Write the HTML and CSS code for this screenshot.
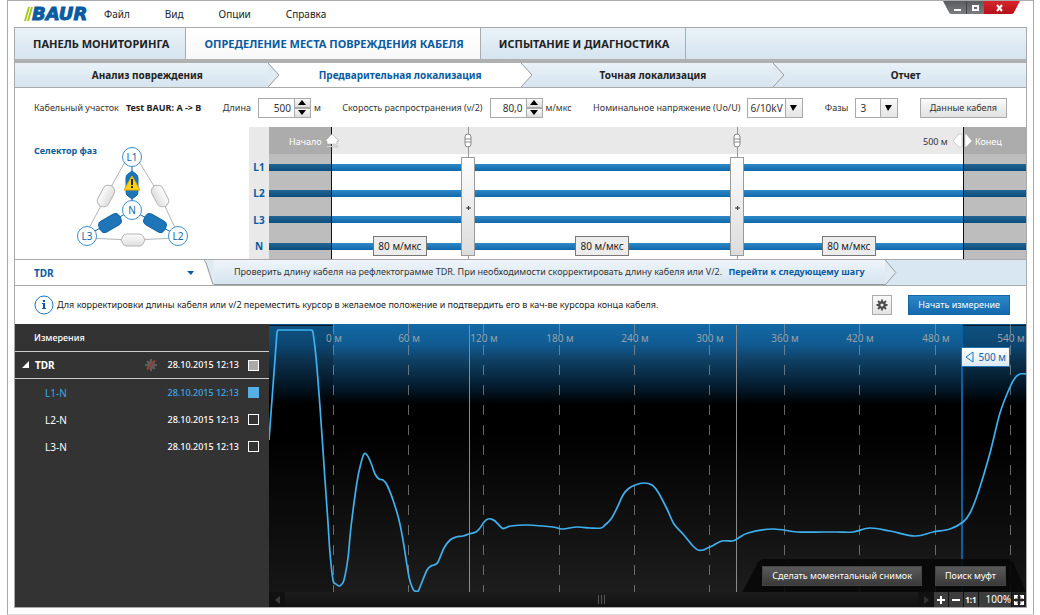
FILE: index.html
```html
<!DOCTYPE html>
<html lang="ru">
<head>
    <meta charset="UTF-8">
    <meta name="viewport" content="width=device-width, initial-scale=1.0">
    <title>BAUR - Предварительная локализация</title>
    <link rel="stylesheet" href="styles.css">
</head>
<body>
    <div class="window">
        <header class="titlebar">
            <div class="logo">
                <svg width="9" height="14" viewBox="0 0 9 14"><path d="M0 14L4 0H6L2 14ZM3 14L7 0H9L5 14Z" fill="#a9c91c"/></svg>
                <span>BAUR</span>
            </div>
            <nav class="menu">
                <a href="#">Файл</a>
                <a href="#">Вид</a>
                <a href="#">Опции</a>
                <a href="#">Справка</a>
            </nav>
            <div class="window-buttons">
                <button type="button" class="win-min" aria-label="Свернуть"><svg width="9" height="8"><path d="M1 5H8V7H1Z" fill="#fff"/></svg></button>
                <button type="button" class="win-max" aria-label="Развернуть"><svg width="9" height="8"><path d="M2 2H7V6H2Z" fill="none" stroke="#fff" stroke-width="2"/></svg></button>
                <button type="button" class="win-close" aria-label="Закрыть"><svg width="9" height="8"><path d="M2 1L7 7M7 1L2 7" stroke="#fff" stroke-width="2"/></svg></button>
            </div>
        </header>

        <main class="app">
            <!-- Tabs -->
            <nav class="tabs">
                <a href="#">ПАНЕЛЬ МОНИТОРИНГА</a>
                <a href="#" class="active">ОПРЕДЕЛЕНИЕ МЕСТА ПОВРЕЖДЕНИЯ КАБЕЛЯ</a>
                <a href="#">ИСПЫТАНИЕ И ДИАГНОСТИКА</a>
            </nav>

            <!-- Steps -->
            <nav class="steps">
                <a href="#" class="first"><span>Анализ повреждения</span></a>
                <a href="#" class="active"><svg class="arrow arrow-blue" viewBox="0 0 12 24"><path d="M0 0L11 12L0 24"/></svg><span>Предварительная локализация</span></a>
                <a href="#"><svg class="arrow arrow-white" viewBox="0 0 12 24"><path d="M0 0L11 12L0 24"/></svg><span>Точная локализация</span></a>
                <a href="#"><svg class="arrow arrow-blue" viewBox="0 0 12 24"><path d="M0 0L11 12L0 24"/></svg><span>Отчет</span></a>
            </nav>

            <!-- Cable parameters -->
            <form class="params">
                <div class="field">
                    <span>Кабельный участок</span>
                    <strong>Test BAUR: A -&gt; B</strong>
                </div>
                <div class="field">
                    <label for="length">Длина</label>
                    <div class="spinner">
                        <input type="text" id="length" value="500">
                        <div class="spin">
                            <button type="button" aria-label="Больше"><svg width="8" height="5"><path d="M4 0L8 5H0Z"/></svg></button>
                            <button type="button" aria-label="Меньше"><svg width="8" height="5"><path d="M0 0H8L4 5Z"/></svg></button>
                        </div>
                        <span class="unit">м</span>
                    </div>
                </div>
                <div class="field">
                    <label for="speed">Скорость распространения (v/2)</label>
                    <div class="spinner">
                        <input type="text" id="speed" value="80,0">
                        <div class="spin">
                            <button type="button" aria-label="Больше"><svg width="8" height="5"><path d="M4 0L8 5H0Z"/></svg></button>
                            <button type="button" aria-label="Меньше"><svg width="8" height="5"><path d="M0 0H8L4 5Z"/></svg></button>
                        </div>
                        <span class="unit">м/мкс</span>
                    </div>
                </div>
                <div class="field">
                    <label for="voltage">Номинальное напряжение (Uo/U)</label>
                    <select id="voltage" class="select-voltage"><option>6/10kV</option></select>
                </div>
                <div class="field">
                    <label for="phases">Фазы</label>
                    <select id="phases" class="select-phases"><option>3</option></select>
                </div>
                <button type="button" class="btn">Данные кабеля</button>
            </form>

            <!-- Phase selector and cable scheme -->
            <section class="cable">
                <div class="selector">
                    <h2>Селектор фаз</h2>
                    <svg class="phases" width="120" height="108" viewBox="0 0 120 108">
                        <defs>
                            <linearGradient id="pill" x1="0" y1="0" x2="0" y2="1">
                                <stop offset="0" stop-color="#fdfdfd"/>
                                <stop offset="1" stop-color="#dedede"/>
                            </linearGradient>
                        </defs>
                        <g stroke="#b4b4b4" fill="url(#pill)">
                            <path d="M55 17L35 53L15 91M67 17L89 53L107 91M15 95L61 97L107 95" fill="none"/>
                            <path d="M-12 0L-10 -4Q-9 -6 -6 -6H6Q9 -6 10 -4L12 0L10 4Q9 6 6 6H-6Q-9 6 -10 4Z" transform="translate(62 97)"/>
                            <path d="M-12 0L-10 -4Q-9 -6 -6 -6H6Q9 -6 10 -4L12 0L10 4Q9 6 6 6H-6Q-9 6 -10 4Z" transform="translate(35 53) rotate(-62)"/>
                            <path d="M-12 0L-10 -4Q-9 -6 -6 -6H6Q9 -6 10 -4L12 0L10 4Q9 6 6 6H-6Q-9 6 -10 4Z" transform="translate(89 53) rotate(62)"/>
                        </g>
                        <g stroke="#1566a8" fill="#1e75b8">
                            <path d="M61 67V15M61 67L15 93M61 67L107 93" fill="none"/>
                            <path d="M-14 0L-11 -4Q-10 -6 -7 -6H7Q10 -6 11 -4L14 0L11 4Q10 6 7 6H-7Q-10 6 -11 4Z" transform="translate(61 42) rotate(90)"/>
                            <path d="M-12 0L-11 -4Q-10 -6 -7 -6H7Q10 -6 11 -4L12 0L11 4Q10 6 7 6H-7Q-10 6 -11 4Z" transform="translate(39 80) rotate(-30)"/>
                            <path d="M-12 0L-11 -4Q-10 -6 -7 -6H7Q10 -6 11 -4L12 0L11 4Q10 6 7 6H-7Q-10 6 -11 4Z" transform="translate(84 80) rotate(30)"/>
                        </g>
                        <path d="M61 33L69 47H53Z" fill="#fcd116" stroke="#e0b000" stroke-linejoin="round"/>
                        <path d="M61 36V42M61 43V45" stroke="#222" stroke-width="2"/>
                        <g fill="#fff" stroke="#3c8fcb">
                            <circle cx="61" cy="14" r="9.500"/>
                            <circle cx="61" cy="67" r="9.500"/>
                            <circle cx="16" cy="93" r="9.500"/>
                            <circle cx="107" cy="93" r="9.500"/>
                        </g>
                        <g class="phase-names">
                            <text x="61" y="18">L1</text>
                            <text x="61" y="71">N</text>
                            <text x="16" y="97">L3</text>
                            <text x="107" y="97">L2</text>
                        </g>
                    </svg>
                </div>
                <div class="wire-names">
                    <span>L1</span>
                    <span>L2</span>
                    <span>L3</span>
                    <span>N</span>
                </div>
                <div class="scheme">
                    <svg viewBox="0 0 757 132">
                        <defs>
                            <linearGradient id="wire" x1="0" y1="0" x2="0" y2="1">
                                <stop offset="0" stop-color="#2f89c8"/>
                                <stop offset="1" stop-color="#0f68aa"/>
                            </linearGradient>
                            <linearGradient id="joint" x1="0" y1="0" x2="0" y2="1">
                                <stop offset="0" stop-color="#fdfdfd"/>
                                <stop offset="1" stop-color="#dcdcdc"/>
                            </linearGradient>
                        </defs>
                        <rect width="757" height="27" fill="#e9e9e9"/>
                        <g fill="url(#wire)">
                            <rect y="37" width="757" height="7"/>
                            <rect y="63" width="757" height="7"/>
                            <rect y="89" width="757" height="7"/>
                            <rect y="116" width="757" height="7"/>
                        </g>
                        <g fill="#000" fill-opacity=".26">
                            <rect width="62" height="132"/>
                            <rect x="694" width="63" height="132"/>
                        </g>
                        <path d="M62 0V132M694 0V132" stroke="#111" transform="translate(.5)"/>
                        <path d="M199 0V132M468 0V132" stroke="#999" transform="translate(.5)"/>
                        <g fill="#fff" stroke="#888">
                            <rect x="196" y="7" width="6" height="13" rx="3"/>
                            <rect x="465" y="7" width="6" height="13" rx="3"/>
                            <path d="M196 12H202M196 15H202M465 12H471M465 15H471"/>
                        </g>
                        <path d="M63 7L70 14H68V17H58V14H56Z M57 19H69V20H57Z" fill="#fff" stroke="#999" stroke-width=".5"/>
                        <path d="M693 7V20H690L684 14L690 7ZM696 7V20H697L703 14L697 7Z" fill="#fff" stroke="#aaa" stroke-width=".5"/>
                        <g fill="url(#joint)" stroke="#999">
                            <rect x="192.5" y="30.500" width="13" height="98"/>
                            <rect x="461.5" y="30.500" width="13" height="98"/>
                        </g>
                        <path d="M197 81H202M199.500 79V83M466 81H471M468.500 79V83" stroke="#333"/>
                        <text class="mark-light" x="20" y="18">Начало</text>
                        <text class="mark-dark" x="654" y="18">500 м</text>
                        <text class="mark-light" x="706" y="18">Конец</text>
                    </svg>
                    <button type="button" class="speed speed-1">80 м/мкс</button>
                    <button type="button" class="speed speed-2">80 м/мкс</button>
                    <button type="button" class="speed speed-3">80 м/мкс</button>
                </div>
            </section>

            <!-- Method and hint -->
            <div class="method">
                <select class="method-select" aria-label="Метод"><option>TDR</option></select>
                <svg class="slant" viewBox="0 0 10 26"><path d="M0 0H10V26H9Z" fill="#dfeaf3"/><path d="M0 0L2 3L9 25H10" fill="none" stroke="#999"/></svg>
                <p class="hint">Проверить длину кабеля на рефлектограмме TDR. При необходимости скорректировать длину кабеля или V/2. <a href="#">Перейти к следующему шагу</a></p>
                <svg class="arrow arrow-hint" viewBox="0 0 12 26"><path d="M0 0L11 13L0 26"/></svg>
            </div>

            <div class="info">
                <svg width="20" height="20" viewBox="0 0 20 20">
                    <circle cx="10" cy="10" r="9" fill="#fff" stroke="#1e75b8"/>
                    <path d="M8 8H11V13H12V14H8V13H9V9H8ZM9 5H11V7H9Z" fill="#0a5ba0"/>
                </svg>
                <p>Для корректировки длины кабеля или v/2 переместить курсор в желаемое положение и подтвердить его в кач-ве курсора конца кабеля.</p>
                <button type="button" class="btn btn-icon" aria-label="Настройки">
                    <svg width="12" height="12" viewBox="-6 -6 12 12">
                        <circle r="2.700" fill="none" stroke="#4a4a4a" stroke-width="2.200"/>
                        <path d="M0 -5.500V-3M0 5.500V3M-5.500 0H-3M5.500 0H3M-4 -4L-2 -2M4 4L2 2M-4 4L-2 2M4 -4L2 -2" stroke="#4a4a4a" stroke-width="1.800"/>
                    </svg>
                </button>
                <button type="button" class="btn-primary">Начать измерение</button>
            </div>

            <!-- Measurements -->
            <section class="measure">
                <aside class="sidebar">
                    <h2>Измерения</h2>
                    <ul>
                        <li class="group">
                            <svg class="tree" width="8" height="8"><path d="M7 0V7H0Z" fill="#fff"/></svg>
                            <label for="m-tdr">TDR</label>
                            <svg class="gear" width="14" height="14" viewBox="-7 -7 14 14">
                                <circle r="4" fill="#5c5c5c"/>
                                <path d="M0 -6V6M-6 0H6M-4 -4L4 4M-4 4L4 -4" stroke="#5c5c5c" stroke-width="2"/>
                                <path d="M-4 5L4 -5" stroke="#a33128" stroke-width="1.5"/>
                            </svg>
                            <time>28.10.2015 12:13</time>
                            <input type="checkbox" id="m-tdr" class="partial">
                        </li>
                        <li class="selected">
                            <label for="m-l1">L1-N</label>
                            <time>28.10.2015 12:13</time>
                            <input type="checkbox" id="m-l1" checked>
                        </li>
                        <li>
                            <label for="m-l2">L2-N</label>
                            <time>28.10.2015 12:13</time>
                            <input type="checkbox" id="m-l2">
                        </li>
                        <li>
                            <label for="m-l3">L3-N</label>
                            <time>28.10.2015 12:13</time>
                            <input type="checkbox" id="m-l3">
                        </li>
                    </ul>
                </aside>

                <div class="chart">
                    <div class="plot">
                        <svg viewBox="0 0 757 268">
                            <defs>
                                <linearGradient id="sky" x1="0" y1="0" x2="0" y2="1">
                                    <stop offset="0" stop-color="#1369a6"/>
                                    <stop offset=".08" stop-color="#105a90"/>
                                    <stop offset=".13" stop-color="#104267"/>
                                    <stop offset=".24" stop-color="#03192a"/>
                                    <stop offset=".3" stop-color="#000"/>
                                    <stop offset=".4" stop-color="#000"/>
                                    <stop offset="1" stop-color="#1d1d1d"/>
                                </linearGradient>
                            </defs>
                            <rect width="757" height="268" fill="url(#sky)"/>
                            <g fill="#000" fill-opacity=".22">
                                <rect width="64" height="268"/>
                                <rect x="694" width="63" height="268"/>
                            </g>
                            <path d="M0 1.500H64M694 1.500H757" stroke="#0a1a28"/>
                            <g id="grid"></g>
                            <path d="M200 1V268M467 1V268" stroke="#8a8a8a" stroke-width="1" transform="translate(.5)"/>
                            <path d="M693 1V268" stroke="#0a5fa5" stroke-width="2"/>
                            <path id="curve" fill="none" stroke="#3fb0ee" stroke-width="1.700"/>
                        </svg>
                        <button type="button" class="cursor-tag">
                            <svg width="9" height="12"><path d="M8 1V11L1 6Z" fill="none" stroke="#1e75b8"/></svg>
                            500 м
                        </button>
                        <div class="actions">
                            <button type="button" class="btn-dark">Сделать моментальный снимок</button>
                            <button type="button" class="btn-dark">Поиск муфт</button>
                        </div>
                    </div>
                    <div class="footer">
                        <button type="button" class="scroll-btn" aria-label="Влево"><svg width="5" height="8"><path d="M5 0V8L0 4Z" fill="#3c3c3c"/></svg></button>
                        <div class="scroll-track"><svg width="7" height="9"><path d="M1 0V9M4 0V9M7 0V9" stroke="#555" transform="translate(-.5)"/></svg></div>
                        <button type="button" class="scroll-btn" aria-label="Вправо"><svg width="5" height="8"><path d="M0 0V8L5 4Z" fill="#333"/></svg></button>
                        <div class="zoom">
                            <button type="button" aria-label="Увеличить"><svg width="8" height="8"><path d="M4 0V8M0 4H8" stroke="#fff" stroke-width="2"/></svg></button>
                            <button type="button" aria-label="Уменьшить"><svg width="8" height="8"><path d="M0 4H8" stroke="#fff" stroke-width="2"/></svg></button>
                            <button type="button" class="one">1:1</button>
                            <output>100%</output>
                            <button type="button" class="full" aria-label="На весь экран"><svg width="10" height="10"><path d="M0 0H4V1L3 2L4 3L3 4L2 3L1 4H0ZM10 0V4H9L8 3L7 4L6 3L7 2L6 1V0ZM0 10V6H1L2 7L3 6L4 7L3 8L4 9V10ZM10 10H6V9L7 8L6 7L7 6L8 7L9 6H10Z" fill="#fff"/></svg></button>
                        </div>
                    </div>
                </div>
            </section>
        </main>
    </div>

    <script>
        const ns = "http://www.w3.org/2000/svg";

        // Distance grid, 60 m per line
        const grid = document.getElementById("grid");
        for (let i = 0; i < 10; i++) {
            const x = Math.round(65 + i * 75.2);
            const line = document.createElementNS(ns, "path");
            line.setAttribute("d", `M${x - 0.5} 0V10M${x - 0.5} 21V268`);
            line.setAttribute("class", "grid-line");
            grid.appendChild(line);

            const text = document.createElementNS(ns, "text");
            text.setAttribute("x", x);
            text.setAttribute("y", 18);
            text.setAttribute("class", "grid-label");
            text.textContent = i * 60 + " м";
            grid.appendChild(text);
        }

        // Reflectogram L1-N
        const pulse = [[0, 116], [8, 8], [9, 6], [43, 6], [44, 8]];
        const points = [
            [44, 8], [47, 33], [51, 83], [56, 156], [59, 199], [61, 229], [64, 256], [67, 260], [70, 262], [72, 261],
            [75, 256], [79, 234], [82, 203], [88, 158], [92, 139], [95, 130], [98, 131], [102, 139], [106, 150],
            [110, 155], [114, 156], [118, 161], [124, 176], [130, 196], [134, 216], [140, 253], [144, 265],
            [146, 267], [149, 267], [151, 263], [158, 246], [162, 242], [165, 241], [169, 238], [175, 224],
            [181, 216], [187, 213], [194, 212], [200, 210], [207, 208], [211, 204], [215, 198], [219, 195],
            [222, 195], [226, 197], [233, 204], [236, 204], [242, 202], [258, 201], [284, 203], [293, 205],
            [308, 203], [321, 204], [332, 204], [336, 201], [342, 195], [348, 184], [354, 171], [359, 165],
            [366, 161], [375, 159], [383, 161], [389, 168], [398, 185], [405, 200], [414, 210], [424, 222],
            [429, 226], [434, 226], [443, 222], [453, 217], [463, 217], [468, 215], [479, 209], [504, 205],
            [528, 208], [554, 208], [568, 208], [584, 208], [601, 204], [621, 207], [646, 212], [664, 208],
            [681, 205], [694, 198], [701, 189], [709, 169], [721, 129], [731, 89], [741, 63], [746, 54],
            [751, 50], [757, 50]
        ];

        let d = "M" + pulse.join("L");
        for (let i = 0; i < points.length - 1; i++) {
            const a = points[i - 1] || points[i];
            const b = points[i];
            const c = points[i + 1];
            const e = points[i + 2] || c;
            d += `C${b[0] + (c[0] - a[0]) / 6} ${b[1] + (c[1] - a[1]) / 6} `
               + `${c[0] - (e[0] - b[0]) / 6} ${c[1] - (e[1] - b[1]) / 6} ${c[0]} ${c[1]}`;
        }
        document.getElementById("curve").setAttribute("d", d);
    </script>
</body>
</html>
```
FILE: styles.css
```css
* {
    box-sizing: border-box;
}

body {
    margin: 0;
    background: #fff;
    color: #333;
    font-family: "Noto Sans", "Open Sans", sans-serif;
    font-size: 9px;
    line-height: 14px;
}

h2, p, ul {
    margin: 0;
    padding: 0;
}

a {
    color: inherit;
    text-decoration: none;
}

button, input, select {
    margin: 0;
    padding: 0;
    font: inherit;
    color: inherit;
    border-radius: 0;
}

svg {
    display: block;
    flex: none;
}

.window {
    margin: 0 6px 0 7px;
    padding: 0 6px 6px;
    border: 1px solid #aaa;
    border-bottom-color: #ddd;
}

/* Title bar */
.titlebar {
    display: flex;
    align-items: center;
    height: 26px;
    padding-left: 10px;
}

.logo {
    display: flex;
    align-items: center;
    width: 80px;
    color: #0a5ba0;
    font: italic bold 18px/18px "DejaVu Sans", sans-serif;
    -webkit-text-stroke: 1px #0a5ba0;
}

.logo span {
    margin-left: -1px;
}

.menu {
    display: flex;
    flex: 1;
    gap: 35px;
    color: #222;
    font-size: 10px;
}

.window-buttons {
    display: flex;
    align-self: flex-start;
    width: 77px;
    height: 13px;
    margin-right: 7px;
    clip-path: polygon(0 0, 100% 0, 92% 90%, 90% 100%, 10% 100%, 8% 90%);
}

.window-buttons button {
    display: flex;
    align-items: center;
    justify-content: center;
    border: 0;
    background: linear-gradient(#5a5d60, #7a7d80);
}

.window-buttons .win-min {
    width: 24px;
    padding-left: 6px;
    border-right: 1px solid #444;
}

.window-buttons .win-max {
    width: 17px;
}

.window-buttons .win-close {
    flex: 1;
    padding-right: 6px;
    background: linear-gradient(#d8242c, #b8121a);
}

.app {
    border: 1px solid #aaa;
}

/* Tabs */
.tabs {
    display: flex;
    background: linear-gradient(#eaf2f8, #d5e4ef);
    border-bottom: 4px solid #b0b0b0;
    color: #222;
    font-size: 11px;
    font-weight: bold;
    line-height: 31px;
}

.tabs a {
    padding: 0 16px 0 18px;
    border-right: 1px solid #aaa;
}

.tabs .active {
    background: linear-gradient(#fff, #f8f8f8);
    color: #0a5ba0;
}

/* Steps */
.steps {
    display: grid;
    grid-template-columns: repeat(4, 1fr);
    border-bottom: 1px solid #aaa;
    color: #222;
    font-size: 10px;
    font-weight: bold;
}

.steps a {
    display: flex;
    align-items: center;
    height: 24px;
    background: linear-gradient(#eaf2f8, #d5e4ef);
}

.steps .first {
    padding-left: 12px;
}

.steps span {
    flex: 1;
    text-align: center;
}

.steps .active {
    background: #fff;
    color: #0a5ba0;
}

.arrow {
    width: 12px;
    align-self: stretch;
    stroke: #999;
    fill: #dfeaf3;
}

.arrow-white {
    fill: #fff;
}

/* Parameters */
.params {
    display: flex;
    align-items: center;
    justify-content: space-between;
    height: 39px;
    padding: 0 19px;
}

.field, .spinner {
    display: flex;
    align-items: center;
}

.field {
    gap: 7px;
}

.field strong {
    color: #222;
}

.spinner input {
    width: 37px;
    height: 20px;
    padding-right: 3px;
    border: 1px solid #aaa;
    background: #fff;
    font-size: 10px;
    text-align: right;
}

.spin {
    display: flex;
    flex-direction: column;
    width: 16px;
}

.spin button {
    display: flex;
    align-items: center;
    justify-content: center;
    height: 10px;
    border: 1px solid #aaa;
    border-left: 0;
    background: linear-gradient(#fafafa, #dcdcdc);
}

.unit {
    margin-left: 3px;
}

.params select {
    height: 20px;
    padding-left: 2px;
    appearance: none;
    border: 1px solid #aaa;
    background:
        url("data:image/svg+xml,%3Csvg xmlns='http://www.w3.org/2000/svg' width='17' height='18'%3E%3Cpath d='M0 0H1V18H0Z' fill='%23aaa'/%3E%3Cpath d='M5 6H12L8 12Z'/%3E%3C/svg%3E") right center no-repeat,
        linear-gradient(#fafafa, #e4e4e4) right center / 17px 100% no-repeat,
        #fff;
    font-size: 10px;
}

.select-voltage {
    width: 56px;
}

.params .select-phases {
    width: 43px;
    padding-left: 4px;
}

.btn {
    height: 20px;
    padding: 0 9px;
    border: 1px solid #aaa;
    background: linear-gradient(#fafafa, #e2e2e2);
}

/* Cable */
.cable {
    display: grid;
    grid-template-columns: 234px 20px 1fr;
    border-bottom: 1px solid #aaa;
}

.selector {
    display: flex;
    align-items: flex-start;
    padding: 16px 0 0 19px;
}

.selector h2 {
    width: 37px;
    color: #0a5ba0;
    font-size: 9px;
    line-height: 16px;
    white-space: nowrap;
}

.phase-names text {
    fill: #1566a8;
    font-size: 10px;
    text-anchor: middle;
}

.wire-names {
    display: flex;
    flex-direction: column;
    padding-top: 27px;
    background: #e9e9e9;
    color: #0a5ba0;
    font-size: 10px;
    font-weight: bold;
    text-align: center;
}

.wire-names span {
    display: flex;
    flex: 1;
    align-items: center;
    justify-content: center;
}

.scheme {
    position: relative;
}

.mark-light {
    fill: #fff;
}

.mark-dark {
    fill: #333;
}

/* Speed labels lie over the cable */
.speed {
    position: absolute;
    bottom: 3px;
    width: 54px;
    height: 20px;
    margin-left: -27px;
    border: 1px solid #777;
    background: #ececec;
    color: #222;
    font-size: 10px;
}

.speed-1 {
    left: 17.3%;
}

.speed-2 {
    left: 44%;
}

.speed-3 {
    left: 76.6%;
}

/* Method */
.method {
    display: flex;
    height: 26px;
    border-bottom: 1px solid #aaa;
    background: #d9e7f2;
}

.method-select {
    width: 189px;
    padding-left: 19px;
    appearance: none;
    border: 0;
    background: url("data:image/svg+xml,%3Csvg xmlns='http://www.w3.org/2000/svg' width='8' height='4'%3E%3Cpath d='M0 0H7L4 4Z' fill='%230a5ba0'/%3E%3C/svg%3E") right 9px center no-repeat #fff;
    color: #0a5ba0;
    font-size: 10px;
    font-weight: bold;
}

.slant {
    width: 10px;
    background: #fff;
}

.hint {
    padding: 0 20px;
    border-bottom: 1px solid #999;
    background: linear-gradient(#eff5fa, #d5e4ef);
    line-height: 24px;
    white-space: nowrap;
}

.hint a {
    margin-left: 4px;
    color: #0a5ba0;
    font-weight: bold;
}

/* Info */
.info {
    display: flex;
    align-items: center;
    height: 38px;
    padding: 0 16px 0 19px;
}

.info p {
    flex: 1;
    padding-left: 3px;
    color: #222;
    white-space: nowrap;
}

.btn-icon {
    display: flex;
    align-items: center;
    justify-content: center;
    width: 20px;
    padding: 0;
}

.btn-primary {
    height: 20px;
    margin-left: 16px;
    padding: 0 9px;
    border: 1px solid #1566a8;
    background: linear-gradient(#2b87c8, #1469ad);
    color: #fff;
}

/* Measurements */
.measure {
    display: grid;
    grid-template-columns: 254px 1fr;
    background: #333;
    color: #fff;
}

.sidebar h2 {
    padding-left: 19px;
    border-bottom: 1px solid #ccc;
    font-size: 9px;
    font-weight: 500;
    line-height: 27px;
}

.sidebar ul {
    list-style: none;
}

.sidebar li {
    display: flex;
    align-items: center;
    height: 27px;
    padding: 0 10px 0 30px;
}

.sidebar .group {
    padding-left: 7px;
    border-bottom: 1px solid #ccc;
    font-weight: bold;
}

.sidebar label {
    flex: 1;
    font-size: 10px;
}

.tree {
    margin-right: 5px;
}

.gear {
    margin-right: 10px;
}

.sidebar time {
    font-weight: 500;
}

.sidebar input {
    width: 11px;
    height: 11px;
    margin-left: 9px;
    appearance: none;
    border: 1px solid #fff;
}

.sidebar .partial {
    background: #aaa;
}

.sidebar .selected {
    color: #3fa9e8;
}

.sidebar .selected input {
    border-color: #55b0e6;
    background: #55b0e6;
}

/* Chart */
.plot {
    position: relative;
}

.grid-line {
    stroke: #999;
    stroke-opacity: .65;
    stroke-dasharray: 10 10;
}

.grid-label {
    fill: #9aa0a5;
    font-size: 10px;
    text-anchor: middle;
}

.cursor-tag {
    position: absolute;
    top: 23px;
    right: 16px;
    display: flex;
    align-items: center;
    gap: 5px;
    height: 20px;
    padding: 0 3px;
    border: 1px solid #1e75b8;
    background: linear-gradient(#fff, #dce8f2);
    color: #1566a8;
    font-size: 10px;
}

.actions {
    position: absolute;
    right: 0;
    bottom: 0;
    display: flex;
    gap: 13px;
    padding: 7px 20px 6px;
    background: rgba(8, 8, 8, .9);
    clip-path: polygon(16px 3px, 20px 0, calc(100% - 18px) 0, calc(100% - 13px) 3px, 100% 100%, 0 100%);
}

.btn-dark {
    height: 20px;
    padding: 0 9px;
    border: 1px solid #444;
    background: linear-gradient(#5a5a5a, #3a3a3a);
    color: #fff;
}

.footer {
    display: flex;
    height: 15px;
    background: #111;
}

.footer button {
    display: flex;
    align-items: center;
    justify-content: center;
    border: 0;
    background: none;
}

.footer .scroll-btn {
    width: 16px;
}

.scroll-track {
    display: flex;
    flex: 1;
    align-items: center;
    justify-content: center;
    background: linear-gradient(#1c1c1c, #121212);
}

.zoom {
    display: flex;
    gap: 1px;
    color: #fff;
    font-size: 10px;
}

.zoom button {
    width: 14px;
    background: #3c3c3c;
}

.zoom .one {
    font-size: 8px;
    font-weight: bold;
}

.zoom output {
    width: 32px;
    background: #3c3c3c;
    text-align: right;
}

.zoom .full {
    background: #222;
}
```
